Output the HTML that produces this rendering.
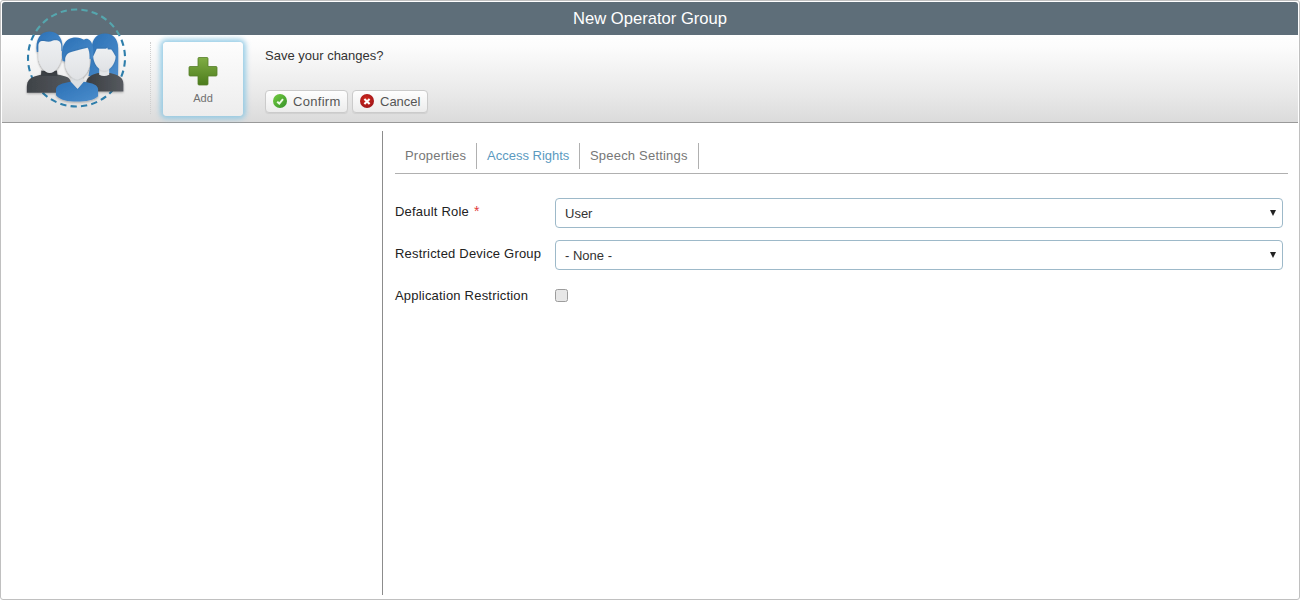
<!DOCTYPE html>
<html><head><meta charset="utf-8">
<style>
*{box-sizing:border-box;margin:0;padding:0}
html,body{width:1300px;height:600px;overflow:hidden;background:#fff;font-family:"Liberation Sans",sans-serif}
#frame{position:absolute;left:0;top:0;width:1300px;height:600px;border:1px solid #c0c0c0;border-radius:3px;background:#fff}
#hdr{position:absolute;left:2px;top:2px;width:1296px;height:33px;background:#5e6e79;border-radius:3px 3px 0 0;color:#fff;font-size:16.6px;text-align:center;line-height:33px}
#tb{position:absolute;left:2px;top:36px;width:1296px;height:87px;background:linear-gradient(#fefefe 0%,#fcfcfc 12%,#e8e8e8 70%,#dbdbdb 100%);border-bottom:1px solid #999}
#sep{position:absolute;left:150px;top:42px;height:72px;border-left:1px dotted #cfcfcf}
#addbtn{position:absolute;left:163px;top:42px;width:80px;height:74px;border-radius:4px;background:linear-gradient(#fdfdfd,#ededed);box-shadow:0 0 5px 3px rgba(140,200,228,0.85)}
#addbtn .lbl{position:absolute;left:0;width:80px;top:50px;text-align:center;font-size:11px;color:#707070}
#msg{position:absolute;left:265px;top:48px;font-size:13px;color:#333}
.btn{position:absolute;top:90px;height:23px;box-shadow:0 1px 1px rgba(0,0,0,0.07);border:1px solid #cbcbcb;border-radius:4px;background:linear-gradient(#fefefe,#ececec);font-size:13px;color:#555}
.btn span{position:absolute;top:3px}
#vsep{position:absolute;left:382px;top:131px;width:1px;height:464px;background:#8c8c8c}
.tab{position:absolute;top:148px;font-size:13px;color:#777;letter-spacing:0.2px}
.tsep{position:absolute;top:143px;width:1px;height:26px;background:#b0b0b0}
#tline{position:absolute;left:395px;top:173px;width:893px;height:1px;background:#b0b0b0}
.lab{position:absolute;left:395px;font-size:13px;color:#222;letter-spacing:0.2px}
.sel{position:absolute;left:555px;width:728px;height:30px;border:1px solid #9db9c9;border-radius:4px;background:#fff;font-size:13px;color:#333}
.sel span{position:absolute;left:9px;top:7px}
.sel i{position:absolute;right:6px;top:11px;width:0;height:0;border-left:3.5px solid transparent;border-right:3.5px solid transparent;border-top:6px solid #222}
#chk{position:absolute;left:555px;top:289px;width:13px;height:13px;border:1px solid #9c9c9c;border-radius:2.5px;background:#e7e7e7}
</style></head><body>
<div id="frame"></div>
<div id="hdr">New Operator Group</div>
<div id="tb">
</div>
<svg id="grp" width="140" height="120" viewBox="0 0 140 120" style="position:absolute;left:0;top:0">
<defs>
<clipPath id="ctop"><rect x="0" y="0" width="140" height="35"/></clipPath>
<clipPath id="cbot"><rect x="0" y="35" width="140" height="85"/></clipPath>
<linearGradient id="gdark" x1="0" y1="0" x2="1" y2="0"><stop offset="0" stop-color="#3f4348"/><stop offset="1" stop-color="#53575c"/></linearGradient>
<linearGradient id="gdark2" x1="0" y1="0" x2="1" y2="0"><stop offset="0" stop-color="#3a3e43"/><stop offset="1" stop-color="#565a5f"/></linearGradient>
<linearGradient id="gblue" x1="0" y1="0" x2="1" y2="1"><stop offset="0" stop-color="#2b70b5"/><stop offset="1" stop-color="#4b8dcc"/></linearGradient>
<linearGradient id="gface" x1="0" y1="0" x2="0" y2="1"><stop offset="0" stop-color="#eef0f2"/><stop offset="1" stop-color="#e0e2e5"/></linearGradient>
<filter id="sh" x="-20%" y="-20%" width="140%" height="140%"><feGaussianBlur in="SourceAlpha" stdDeviation="1.2"/><feOffset dy="1"/><feComponentTransfer><feFuncA type="linear" slope="0.3"/></feComponentTransfer><feMerge><feMergeNode/><feMergeNode in="SourceGraphic"/></feMerge></filter>
<filter id="fsh" x="-20%" y="-20%" width="140%" height="140%"><feGaussianBlur in="SourceAlpha" stdDeviation="0.8"/><feComponentTransfer><feFuncA type="linear" slope="0.25"/></feComponentTransfer><feMerge><feMergeNode/><feMergeNode in="SourceGraphic"/></feMerge></filter>
</defs>
<circle cx="76.5" cy="58" r="48.5" fill="none" stroke="#55a6ae" stroke-width="2.1" pathLength="29" stroke-dasharray="0.6 0.4" stroke-dashoffset="0.78" clip-path="url(#ctop)"/>
<circle cx="76.5" cy="58" r="48.5" fill="none" stroke="#2e7eab" stroke-width="2.1" pathLength="29" stroke-dasharray="0.6 0.4" stroke-dashoffset="0.78" clip-path="url(#cbot)"/>
<g filter="url(#sh)">
<!-- left man -->
<path d="M26.8,92.8 L26.8,87 C27,82 28.5,79.5 32,77.5 C35,76 39,75 42,74.5 L57,74.5 C61,75 65,76 68,77.5 C70,79 71,81 71,84 L71,92.8 Z" fill="url(#gdark)"/>
<path d="M41.3,70.5 C45,71 53,71 57,70.5 L57.5,76 L41,76 Z" fill="#3b3f44"/>
<path d="M36.7,52 C35,40 40,31.5 49.5,31.5 C59,31.5 63.7,40 62.3,51 Z" fill="url(#gblue)"/>
<path d="M38.4,46 C38.4,41.5 41,40.5 44,41 C47,41.8 50,42 52.5,40.8 C57,39.5 61.2,41 61.2,46 L61.3,57 C61,65 55,73 49.8,73 C44.5,73 38.6,65 38.4,57 Z" fill="url(#gface)" filter="url(#fsh)"/>
<!-- right woman -->
<path d="M88.5,76 C90,68 91.5,58 91.8,48 C92.1,38.5 97,33.6 105,33.6 C113,33.6 118,38.5 118.2,48 C118.4,58 118.2,68 118,76 Z" fill="url(#gblue)"/>
<path d="M86,91.6 L86,84 C86,77.5 91,74.5 98,73 L110,73 C118,74.5 123.4,77.5 123.4,84 L123.4,91.6 Z" fill="url(#gdark2)"/>
<path d="M99.2,66 L109.2,66 L109.2,74.8 C105.5,76.5 102.5,76.5 99.2,74.8 Z" fill="#e3e5e7"/>
<path d="M96.8,48.8 L106,48.8 L107.3,47.8 L107.8,49.6 L111.2,49.6 C112.5,51 113.8,53.5 115.6,56.4 C115.5,63 110,70.8 104.4,70.8 C98.8,70.8 93.4,63 93.2,56.4 C94.5,54 95.8,51 96.8,48.8 Z" fill="url(#gface)" filter="url(#fsh)"/>
<!-- middle person -->
<path d="M56,95.2 L56,89 C56.5,85 62,83 71,81.7 L77.6,88.7 L83.6,81.7 C93,83 97.8,85 98.1,89 L98.1,96.2 C94,100 86,101.6 77,101.6 C68,101.6 60,100 56,95.2 Z" fill="url(#gblue)"/>
<path d="M72.5,73 L81.8,73 L83.6,81.7 L77.6,88.7 L71,81.7 Z" fill="#dcdfe2"/>
<path d="M62.6,61 C60.5,48 64,37.4 76,37.4 C79.5,37.4 82,38.3 84,39.8 C85.5,38.3 88,38.5 90,40.5 C93.6,44.5 93.8,51 92.8,58.6 L90,59 L65,61.5 Z" fill="url(#gblue)"/>
<path d="M65.2,58.5 C66,54 69,52.2 74,51.2 C79,50.2 84,48.5 87.6,47.8 C88.9,50 89.5,53 89.5,57.5 L89.5,64 C89.3,72 82,79.4 77.2,79.4 C72.4,79.4 65.4,72 65.2,64 Z" fill="url(#gface)" filter="url(#fsh)"/>
</g>
</svg>
<div id="sep"></div>
<div id="addbtn"><div class="lbl">Add</div></div>
<svg width="30" height="30" viewBox="0 0 30 30" style="position:absolute;left:188px;top:56px">
<defs><linearGradient id="gplus" x1="0" y1="0" x2="0" y2="1"><stop offset="0" stop-color="#80ad45"/><stop offset="1" stop-color="#4c7c1c"/></linearGradient></defs>
<path d="M11,1.5 L19,1.5 Q20,1.5 20,2.5 L20,10.5 L28,10.5 Q29,10.5 29,11.5 L29,19 Q29,20 28,20 L20,20 L20,28 Q20,29 19,29 L11,29 Q10,29 10,28 L10,20 L2,20 Q1,20 1,19 L1,11.5 Q1,10.5 2,10.5 L10,10.5 L10,2.5 Q10,1.5 11,1.5 Z" fill="url(#gplus)" stroke="#557f2a" stroke-width="0.8"/>
</svg>
<div id="msg">Save your changes?</div>
<div class="btn" style="left:265px;width:83px"><span style="left:27px;letter-spacing:0.3px">Confirm</span></div>
<div class="btn" style="left:352px;width:76px"><span style="left:27px">Cancel</span></div>
<svg width="16" height="16" viewBox="0 0 16 16" style="position:absolute;left:272px;top:93px">
<defs><linearGradient id="gchk" x1="0" y1="0" x2="1" y2="1"><stop offset="0" stop-color="#74cc40"/><stop offset="1" stop-color="#35922a"/></linearGradient></defs>
<circle cx="8" cy="8" r="7" fill="url(#gchk)"/>
<path d="M5.2,8.7 L7.3,10.6 L11,6.2" fill="none" stroke="#eefbe6" stroke-width="2"/>
</svg>
<svg width="16" height="16" viewBox="0 0 16 16" style="position:absolute;left:359px;top:93px">
<defs><radialGradient id="gx" cx="0.45" cy="0.4" r="0.6"><stop offset="0" stop-color="#d42a1e"/><stop offset="1" stop-color="#a0161a"/></radialGradient></defs>
<circle cx="8" cy="8" r="7" fill="url(#gx)"/>
<path d="M5.4,6 L10.6,11 M10.6,6 L5.4,11" fill="none" stroke="#fff" stroke-width="2.1"/>
</svg>
<div id="vsep"></div>
<div class="tab" style="left:405px">Properties</div>
<div class="tsep" style="left:476px"></div>
<div class="tab" style="left:487px;color:#5b9abf;letter-spacing:0">Access Rights</div>
<div class="tsep" style="left:579px"></div>
<div class="tab" style="left:590px">Speech Settings</div>
<div class="tsep" style="left:698px"></div>
<div id="tline"></div>
<div class="lab" style="top:204px">Default Role <span style="color:#e23a3a;font-size:14px;position:absolute;left:79px;top:-1px">*</span></div>
<div class="sel" style="top:198px"><span>User</span><i></i></div>
<div class="lab" style="top:246px">Restricted Device Group</div>
<div class="sel" style="top:240px"><span>- None -</span><i></i></div>
<div class="lab" style="top:288px">Application Restriction</div>
<div id="chk"></div>
</body></html>
